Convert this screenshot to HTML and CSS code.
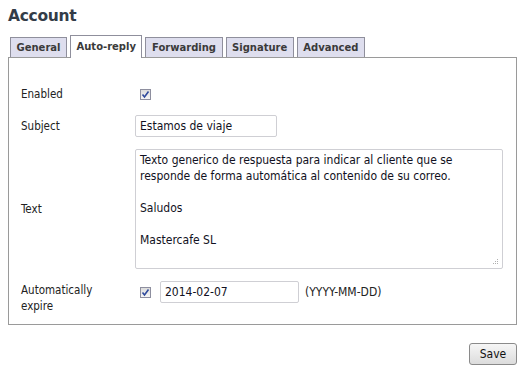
FILE: index.html
```html
<!DOCTYPE html>
<html>
<head>
<meta charset="utf-8">
<link rel="stylesheet" href="styles.css">
</head>
<body>
<div class="page">
  <h1 class="title">Account</h1>
  <div class="tabs">
    <div class="tab">General</div>
    <div class="tab active">Auto-reply</div>
    <div class="tab">Forwarding</div>
    <div class="tab">Signature</div>
    <div class="tab">Advanced</div>
  </div>
  <div class="panel">
    <div class="form">
      <div class="label row-enabled">Enabled</div>
      <div class="control row-enabled">
        <span class="check"><svg width="11" height="11" viewBox="0 0 11 11"><path d="M2.5 5.5 L4.5 8 L8.5 2.5" fill="none" stroke="#2f4a9c" stroke-width="1.6"/></svg></span>
      </div>

      <div class="label row-subject">Subject</div>
      <div class="control row-subject">
        <div class="input subject">Estamos de viaje</div>
      </div>

      <div class="label row-text">Text</div>
      <div class="control row-text">
        <div class="textarea">
          <p>Texto generico de respuesta para indicar al cliente que se<br>responde de forma automática al contenido de su correo.</p>
          <p>Saludos</p>
          <p>Mastercafe SL</p>
          <span class="grip"><svg width="6" height="6" viewBox="0 0 6 6"><g fill="#b0b0b0"><rect x="4" y="0" width="1" height="1"/><rect x="2" y="2" width="1" height="1"/><rect x="4" y="2" width="1" height="1"/><rect x="0" y="4" width="1" height="1"/><rect x="2" y="4" width="1" height="1"/><rect x="4" y="4" width="1" height="1"/></g></svg></span>
        </div>
      </div>

      <div class="label row-expire expire-label">Automatically<br>expire</div>
      <div class="control row-expire expire">
        <span class="check"><svg width="11" height="11" viewBox="0 0 11 11"><path d="M2.5 5.5 L4.5 8 L8.5 2.5" fill="none" stroke="#2f4a9c" stroke-width="1.6"/></svg></span>
        <div class="input date">2014-02-07</div>
        <span class="hint">(YYYY-MM-DD)</span>
      </div>
    </div>
  </div>
  <div class="actions">
    <button class="save">Save</button>
  </div>
</div>
</body>
</html>
```
FILE: styles.css
```css
html, body {
  margin: 0;
  padding: 0;
  background: #ffffff;
}
body {
  font-family: "DejaVu Sans Condensed", "DejaVu Sans", sans-serif;
  font-size: 11.5px;
  color: #222222;
}
.page {
  width: 509px;
  padding: 6px 0 0 8px;
}
.title {
  margin: 0;
  font-family: "DejaVu Sans", sans-serif;
  font-size: 15.5px;
  font-weight: bold;
  color: #333c48;
  height: 20px;
  line-height: 20px;
  letter-spacing: -0.3px;
}
.tabs {
  display: flex;
  gap: 3px;
  margin-top: 10px;
  padding-left: 2px;
  height: 21px;
  align-items: flex-end;
  position: relative;
  z-index: 1;
}
.tab {
  height: 19px;
  line-height: 19px;
  padding: 0 5.5px;
  border: 1px solid #8f8f9c;
  border-bottom: none;
  background: #dedeee;
  font-family: "DejaVu Sans", sans-serif;
  font-size: 10px;
  font-weight: bold;
  color: #3a3a3a;
}
.tab.active {
  height: 22px;
  line-height: 21px;
  background: #ffffff;
  margin-bottom: -1px;
}
.panel {
  border: 1px solid #9a9a9a;
  height: 266px;
}
.form {
  display: grid;
  grid-template-columns: 114px 1fr;
  padding: 21px 0 0 12px;
}
.label {
  display: flex;
  align-items: center;
  line-height: 16px;
}
.control {
  display: flex;
  align-items: center;
  font-size: 12px;
}
.row-enabled { height: 30px; }
.row-subject { height: 26px; margin-top: 4px; }
.row-subject.control, .row-subject.label { margin-bottom: 9px; }
.row-text { height: 120px; margin-top: 1px; }
.row-expire { margin-top: 12px; height: 22px; }
.expire-label { align-items: flex-start; padding-top: 1px; }
.check {
  display: inline-block;
  width: 11px;
  height: 11px;
  border: 1px solid #8e8f9f;
  background: linear-gradient(#dcdcdc, #f6f6f6);
  margin-left: 5px;
  box-sizing: border-box;
  position: relative;
}
.check svg {
  position: absolute;
  left: -1px;
  top: -1px;
}
.input {
  border: 1px solid #cfcfd4;
  border-radius: 2px;
  box-sizing: border-box;
  height: 22px;
  line-height: 20px;
  padding: 0 4px;
  color: #111122;
}
.input.subject { width: 142px; }
.textarea {
  position: relative;
  width: 368px;
  height: 120px;
  box-sizing: border-box;
  border: 1px solid #cfcfd4;
  border-radius: 2px;
  padding: 2px 4px;
  color: #111122;
  line-height: 16px;
}
.textarea p { margin: 0 0 16px 0; }
.grip {
  position: absolute;
  right: 3px;
  bottom: 3px;
  width: 6px;
  height: 6px;
  display: flex;
}
.expire .check { margin-right: 9px; }
.input.date { width: 139px; }
.hint {
  margin-left: 6px;
}
.actions {
  display: flex;
  justify-content: flex-end;
  margin-top: 18px;
}
.save {
  width: 48px;
  height: 22px;
  border: 1px solid #8a8a8a;
  border-radius: 3px;
  background: linear-gradient(#f6f6f6, #dcdcdc);
  font-family: "DejaVu Sans Condensed", "DejaVu Sans", sans-serif;
  font-size: 12px;
  color: #111;
  padding: 0;
}
```
